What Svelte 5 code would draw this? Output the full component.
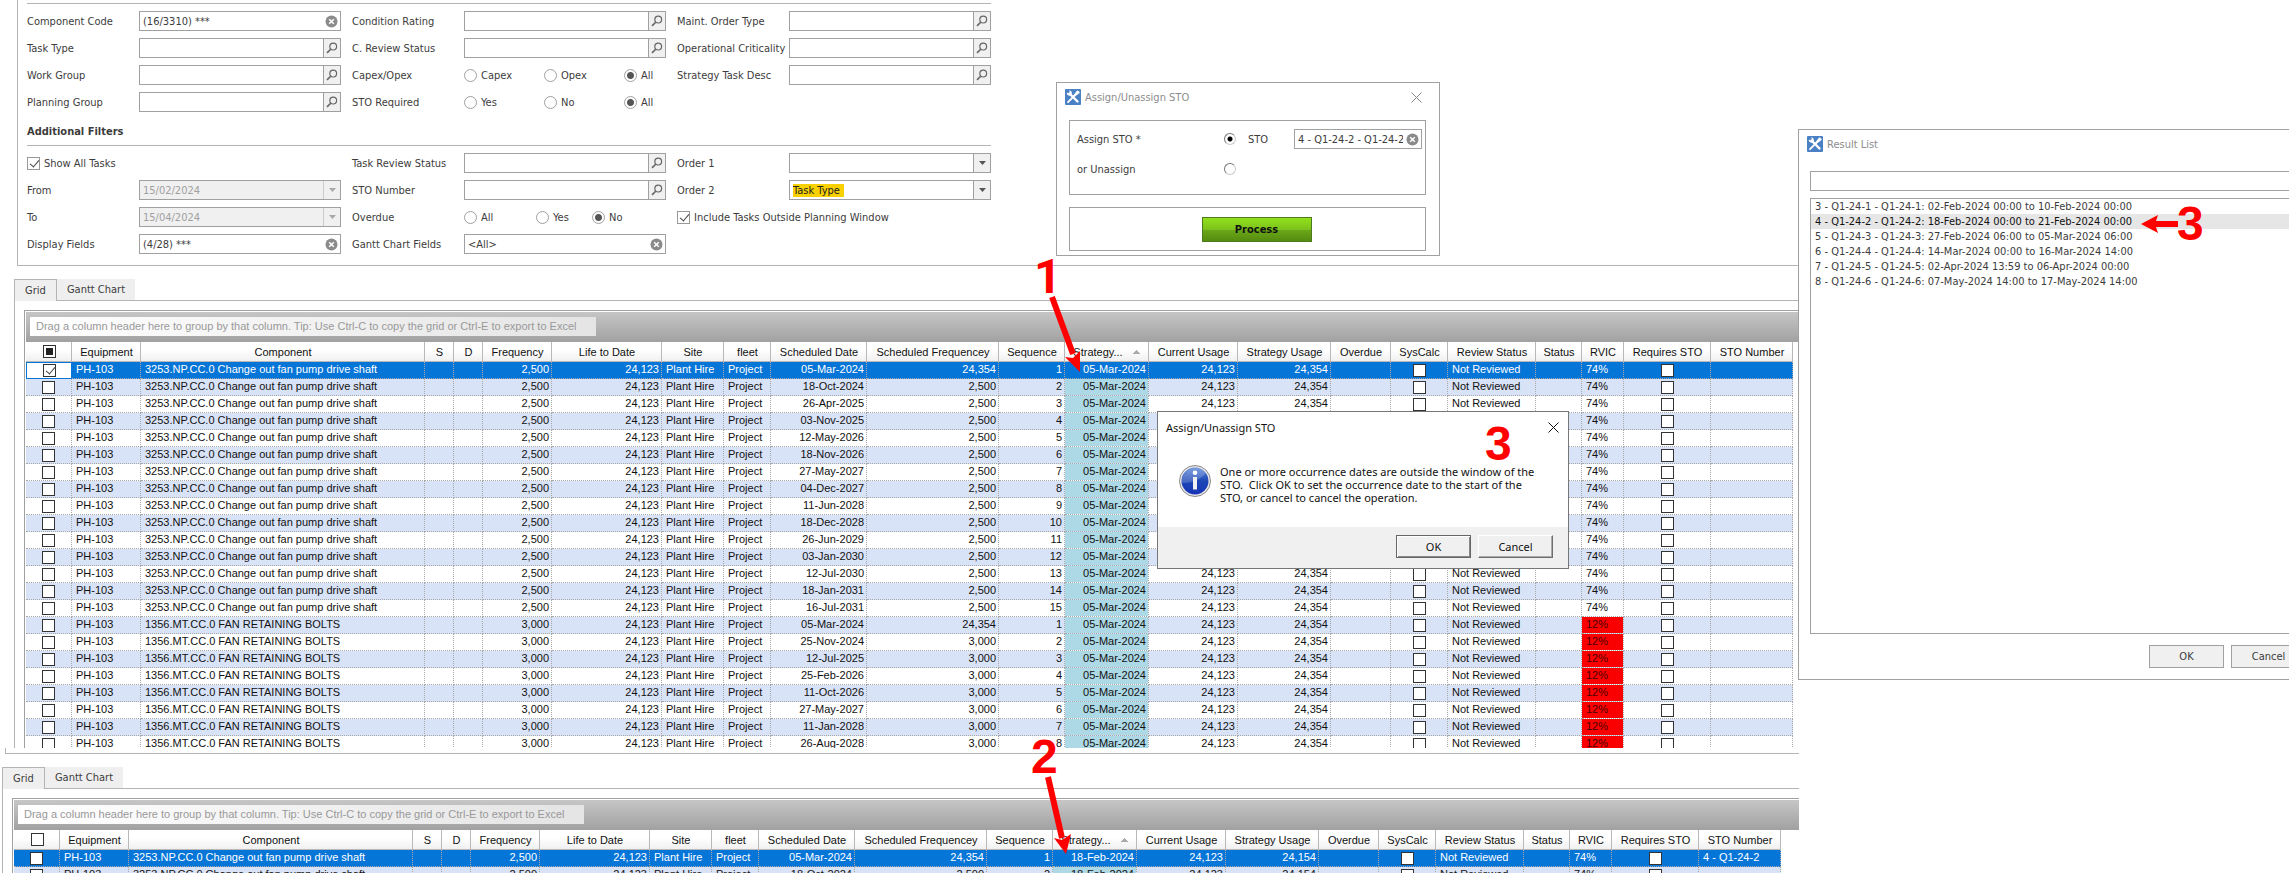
<script lang="ts">
	type Row = {
		component: string;
		frequency: string;
		date: string;
		scheduled: string;
		sequence: number;
		strategy: string;
		usage: string;
		rvic: string;
		sto: string;
	};

	const columns = [
		{ name: 'Equipment', width: 69 },
		{ name: 'Component', width: 284 },
		{ name: 'S', width: 29 },
		{ name: 'D', width: 29 },
		{ name: 'Frequency', width: 69 },
		{ name: 'Life to Date', width: 110 },
		{ name: 'Site', width: 62 },
		{ name: 'fleet', width: 47 },
		{ name: 'Scheduled Date', width: 96 },
		{ name: 'Scheduled Frequencey', width: 132 },
		{ name: 'Sequence', width: 66 },
		{ name: 'Strategy...', width: 84, sorted: true },
		{ name: 'Current Usage', width: 89 },
		{ name: 'Strategy Usage', width: 93 },
		{ name: 'Overdue', width: 60 },
		{ name: 'SysCalc', width: 57 },
		{ name: 'Review Status', width: 88 },
		{ name: 'Status', width: 46 },
		{ name: 'RVIC', width: 42 },
		{ name: 'Requires STO', width: 87 },
		{ name: 'STO Number', width: 82 }
	];

	const shaftDates = [
		'05-Mar-2024', '18-Oct-2024', '26-Apr-2025', '03-Nov-2025', '12-May-2026',
		'18-Nov-2026', '27-May-2027', '04-Dec-2027', '11-Jun-2028', '18-Dec-2028',
		'26-Jun-2029', '03-Jan-2030', '12-Jul-2030', '18-Jan-2031', '16-Jul-2031'
	];
	const boltDates = [
		'05-Mar-2024', '25-Nov-2024', '12-Jul-2025', '25-Feb-2026',
		'11-Oct-2026', '27-May-2027', '11-Jan-2028', '26-Aug-2028'
	];

	function makeRows(
		dates: string[],
		component: string,
		frequency: string,
		rvic: string,
		strategy = '05-Mar-2024',
		usage = '24,354',
		sto = ''
	): Row[] {
		return dates.map((date, i) => ({
			component,
			frequency,
			date,
			scheduled: i === 0 ? '24,354' : frequency,
			sequence: i + 1,
			strategy,
			usage,
			rvic,
			sto: i === 0 ? sto : ''
		}));
	}

	const shaft = '3253.NP.CC.0 Change out fan pump drive shaft';
	const bolts = '1356.MT.CC.0 FAN RETAINING BOLTS';
	const planned = [
		...makeRows(shaftDates, shaft, '2,500', '74%'),
		...makeRows(boltDates, bolts, '3,000', '12%')
	];
	const assigned = makeRows(shaftDates.slice(0, 2), shaft, '2,500', '74%', '18-Feb-2024', '24,154', '4 - Q1-24-2');

	const results = [
		'3 - Q1-24-1 - Q1-24-1: 02-Feb-2024 00:00 to 10-Feb-2024 00:00',
		'4 - Q1-24-2 - Q1-24-2: 18-Feb-2024 00:00 to 21-Feb-2024 00:00',
		'5 - Q1-24-3 - Q1-24-3: 27-Feb-2024 06:00 to 05-Mar-2024 06:00',
		'6 - Q1-24-4 - Q1-24-4: 14-Mar-2024 00:00 to 16-Mar-2024 14:00',
		'7 - Q1-24-5 - Q1-24-5: 02-Apr-2024 13:59 to 06-Apr-2024 00:00',
		'8 - Q1-24-6 - Q1-24-6: 07-May-2024 14:00 to 17-May-2024 14:00'
	];
	let selectedResult = $state(1);

	const partial = (node: HTMLInputElement, on: boolean) => {
		node.indeterminate = on;
	};
</script>

{#snippet clearIcon()}
	<svg width="13" height="13" viewBox="0 0 13 13" aria-hidden="true">
		<circle cx="6.5" cy="6.5" r="6" fill="#8b8b8b" />
		<path d="M4.2 4.2l4.6 4.6M8.8 4.2l-4.6 4.6" stroke="#fff" stroke-width="1.5" />
	</svg>
{/snippet}

{#snippet lookup(id: string, label: string)}
	<label for={id}>{label}</label>
	<div class="field">
		<input {id} type="text" />
		<button class="side" aria-label="Search {label}">
			<svg width="12" height="12" viewBox="0 0 12 12" aria-hidden="true">
				<circle cx="7.2" cy="4.6" r="3.4" fill="none" stroke="#666" stroke-width="1.2" />
				<path d="M4.7 7.2L1 10.9" stroke="#666" stroke-width="1.6" />
			</svg>
		</button>
	</div>
{/snippet}

{#snippet clearable(id: string, label: string, value: string)}
	<label for={id}>{label}</label>
	<div class="field">
		<input {id} type="text" {value} />
		<button class="clear" aria-label="Clear {label}">{@render clearIcon()}</button>
	</div>
{/snippet}

{#snippet arrow()}
	<svg class="arrow" width="7" height="4" viewBox="0 0 7 4" aria-hidden="true">
		<path d="M0 0h7L3.5 4z" fill="currentColor" />
	</svg>
{/snippet}

{#snippet dateBox(id: string, label: string, value: string)}
	<label for={id}>{label}</label>
	<div class="field disabled">
		<input {id} type="text" {value} disabled />
		<button class="side" aria-label="Pick {label}" disabled>{@render arrow()}</button>
	</div>
{/snippet}

{#snippet radios(name: string, label: string, options: string[], checked: string)}
	<span>{label}</span>
	<div class="radios" class:tight={name === 'overdue'} role="radiogroup" aria-label={label}>
		{#each options as option}
			<label><input type="radio" {name} value={option} checked={option === checked} />{option}</label>
		{/each}
	</div>
{/snippet}

{#snippet tools()}
	<svg width="16" height="16" viewBox="0 0 16 16" aria-hidden="true">
		<rect width="16" height="16" rx="1" fill="#4a80c4" />
		<path d="M4.5 4.5l8 8" stroke="#fff" stroke-width="2.4" stroke-linecap="round" />
		<path d="M1.8 3.4a2.6 2.6 0 0 0 4.4 2.4 2.6 2.6 0 0 0-2.4-4.3l1.2 1.6-1.3 1.3z" fill="#fff" />
		<path d="M3 13.2l6.3-6.4" stroke="#fff" stroke-width="1.8" stroke-linecap="round" />
		<path d="M9 7l3.6-4.6 1.2 1.1z" stroke="#fff" stroke-width="1.8" stroke-linejoin="round" fill="#4a80c4" />
	</svg>
{/snippet}

{#snippet cross()}
	<svg width="11" height="11" viewBox="0 0 11 11" aria-hidden="true">
		<path d="M.5.5l10 10M10.5.5l-10 10" stroke="currentColor" />
	</svg>
{/snippet}

{#snippet pane(rows: Row[], ticked: boolean)}
	<div class="tabs" role="tablist">
		<button class="tab active" role="tab" aria-selected="true">Grid</button>
		<button class="tab" role="tab" aria-selected="false">Gantt Chart</button>
		<div class="tab-rest"></div>
	</div>
	<div class="pane-body">
		<div class="grid-box">
			<div class="group-bar">
				<span>Drag a column header here to group by that column. Tip: Use Ctrl-C to copy the grid or Ctrl-E to export to Excel</span>
			</div>
			<table>
				<colgroup>
					<col style="width: 46px" />
					{#each columns as column}
						<col style="width: {column.width}px" />
					{/each}
				</colgroup>
				<thead>
					<tr>
						<th><input type="checkbox" aria-label="Select all" use:partial={ticked} /></th>
						{#each columns as column}
							<th class:sorted={column.sorted}>{column.name}</th>
						{/each}
					</tr>
				</thead>
				<tbody>
					{#each rows as row, i}
						<tr class:selected={i === 0}>
							<td class="mid" class:focused={ticked && i === 0}>
								<input type="checkbox" aria-label="Select row" checked={ticked && i === 0} />
							</td>
							<td>PH-103</td>
							<td>{row.component}</td>
							<td></td>
							<td></td>
							<td class="num">{row.frequency}</td>
							<td class="num">24,123</td>
							<td>Plant Hire</td>
							<td>Project</td>
							<td class="num">{row.date}</td>
							<td class="num">{row.scheduled}</td>
							<td class="num">{row.sequence}</td>
							<td class="num strategy">{row.strategy}</td>
							<td class="num">24,123</td>
							<td class="num">{row.usage}</td>
							<td></td>
							<td class="mid"><input type="checkbox" aria-label="SysCalc" /></td>
							<td>Not Reviewed</td>
							<td></td>
							<td class:low={row.rvic === '12%'}>{row.rvic}</td>
							<td class="mid"><input type="checkbox" aria-label="Requires STO" /></td>
							<td>{row.sto}</td>
						</tr>
					{/each}
				</tbody>
			</table>
		</div>
	</div>
{/snippet}

<div class="screen">
	<main>
		<section class="filters">
			<div class="filter-group">
				<div class="fields">
					{@render clearable('component-code', 'Component Code', '(16/3310) ***')}
					{@render lookup('task-type', 'Task Type')}
					{@render lookup('work-group', 'Work Group')}
					{@render lookup('planning-group', 'Planning Group')}
				</div>
				<div class="fields">
					{@render lookup('condition', 'Condition Rating')}
					{@render lookup('c-review', 'C. Review Status')}
					{@render radios('capex', 'Capex/Opex', ['Capex', 'Opex', 'All'], 'All')}
					{@render radios('sto-required', 'STO Required', ['Yes', 'No', 'All'], 'All')}
				</div>
				<div class="fields">
					{@render lookup('order-type', 'Maint. Order Type')}
					{@render lookup('criticality', 'Operational Criticality')}
					{@render lookup('task-desc', 'Strategy Task Desc')}
				</div>
			</div>
			<h2>Additional Filters</h2>
			<div class="filter-group">
				<div class="fields">
					<label class="check"><input type="checkbox" checked />Show All Tasks</label>
					{@render dateBox('from', 'From', '15/02/2024')}
					{@render dateBox('to', 'To', '15/04/2024')}
					{@render clearable('display-fields', 'Display Fields', '(4/28) ***')}
				</div>
				<div class="fields">
					{@render lookup('task-review', 'Task Review Status')}
					{@render lookup('sto-number', 'STO Number')}
					{@render radios('overdue', 'Overdue', ['All', 'Yes', 'No'], 'No')}
					{@render clearable('gantt-fields', 'Gantt Chart Fields', '<All>')}
				</div>
				<div class="fields">
					<label for="order-1">Order 1</label>
					<div class="field">
						<select id="order-1"><option></option><option>Task Type</option></select>
						<span class="side">{@render arrow()}</span>
					</div>
					<label for="order-2">Order 2</label>
					<div class="field">
						<select id="order-2" class="marked"><option>Task Type</option></select>
						<span class="side">{@render arrow()}</span>
					</div>
					<label class="check"><input type="checkbox" checked />Include Tasks Outside Planning Window</label>
				</div>
			</div>
		</section>

		<section class="pane first">{@render pane(planned, true)}</section>
		<div class="frame-end"></div>
		<section class="pane second">{@render pane(assigned, false)}</section>
	</main>

	<section class="window assign" role="dialog" aria-label="Assign/Unassign STO">
		<header>
			{@render tools()}
			<h3>Assign/Unassign STO</h3>
			<button class="close" aria-label="Close">{@render cross()}</button>
		</header>
		<div class="box choices">
			<label for="assign">Assign STO *</label>
			<input id="assign" type="radio" name="mode" checked />
			<label for="sto">STO</label>
			<div class="field">
				<input id="sto" type="text" value="4 - Q1-24-2 - Q1-24-2" />
				<button class="clear" aria-label="Clear STO">{@render clearIcon()}</button>
			</div>
			<label for="unassign">or Unassign</label>
			<input id="unassign" type="radio" name="mode" />
		</div>
		<div class="box actions">
			<button class="process">Process</button>
		</div>
	</section>

	<section class="window result" role="dialog" aria-label="Result List">
		<header>
			{@render tools()}
			<h3>Result List</h3>
		</header>
		<div class="field"><input type="text" aria-label="Search results" /></div>
		<ul role="listbox" aria-label="Results">
			{#each results as result, i}
				<li role="option" aria-selected={i === selectedResult}>
					<button onclick={() => (selectedResult = i)}>{result}</button>
				</li>
			{/each}
		</ul>
		<footer>
			<button>OK</button>
			<button>Cancel</button>
		</footer>
	</section>

	<section class="window message" role="alertdialog" aria-label="Confirm dates">
		<header>
			<h3>Assign/Unassign STO</h3>
			<button class="close" aria-label="Close">{@render cross()}</button>
		</header>
		<div class="message-body">
			<svg width="32" height="32" viewBox="0 0 32 32" aria-hidden="true">
				<defs>
					<linearGradient id="ball" x1="0" y1="0" x2="0" y2="1">
						<stop offset="0" stop-color="#5b86d8" />
						<stop offset="0.5" stop-color="#1c46b4" />
						<stop offset="1" stop-color="#1733b8" />
					</linearGradient>
				</defs>
				<circle cx="16" cy="16" r="15.5" fill="#e8e8e8" stroke="#8a8a8a" />
				<circle cx="16" cy="16" r="13.5" fill="url(#ball)" />
				<path d="M3 18A13.5 13.5 0 0 1 27 8C22 14 14 18 3 18z" fill="#fff" opacity="0.2" />
				<circle cx="16" cy="7.8" r="2.3" fill="#fff" />
				<path d="M14 12h4v12.500h-4z" fill="#f1f1f1" />
			</svg>
			<p>One or more occurrence dates are outside the window of the<br />STO.&nbsp; Click OK to set the occurrence date to the start of the<br />STO, or cancel to cancel the operation.</p>
		</div>
		<footer>
			<button class="default">OK</button>
			<button>Cancel</button>
		</footer>
	</section>

	<svg class="notes" aria-hidden="true">
		<text class="plain" x="1034" y="293">1</text>
		<path d="M1052 297L1073 354" />
		<path class="head" d="M1080 372L1065 357L1073 358L1080 351z" />
		<text x="1031" y="773">2</text>
		<path d="M1048 777L1062 838" />
		<path class="head" d="M1066 854L1054 838L1062 840L1071 834z" />
		<text x="1485" y="460">3</text>
		<text x="2177" y="240">3</text>
		<path d="M2178 224H2154" />
		<path class="head" d="M2141 224L2158 215L2155 224L2158 233z" />
	</svg>
</div>

<style>
	:global(body) {
		margin: 0;
		background: #fff;
	}

	.screen {
		position: relative;
		height: 100vh;
		overflow: hidden;
		font: 11px/15px 'DejaVu Sans Condensed', 'DejaVu Sans', Tahoma, sans-serif;
		color: #3c3c3c;
	}

	.screen * {
		box-sizing: border-box;
	}

	input,
	select,
	button {
		font: inherit;
		color: inherit;
		margin: 0;
		padding: 0;
		border: 0;
		border-radius: 0;
		background: none;
	}

	svg {
		display: block;
		flex: none;
	}

	main {
		display: flex;
		flex-direction: column;
		height: 100%;
		margin-right: 490px;
	}

	/* Filters */
	.filters {
		flex: none;
		margin-left: 17px;
		padding: 3px 0 4px 9px;
		border-left: 1px solid #b4b4b4;
		border-bottom: 1px solid #b4b4b4;
	}

	.filter-group {
		display: flex;
		gap: 11px;
		width: 964px;
		padding: 7px 0;
		border-top: 1px solid #b4b4b4;
	}

	h2 {
		margin: 0;
		font-size: 11px;
		line-height: 26px;
	}

	.fields {
		display: grid;
		grid-template-columns: 112px 202px;
		grid-auto-rows: 20px;
		align-content: start;
		align-items: center;
		row-gap: 7px;
		white-space: nowrap;
	}

	.field {
		display: flex;
		align-items: center;
		height: 20px;
		border: 1px solid #a0a0a0;
		background: #fff;
		overflow: hidden;
	}

	.field input,
	.field select {
		flex: 1;
		min-width: 0;
		height: 18px;
		padding: 0 3px;
		appearance: none;
		outline: none;
	}

	.side {
		display: flex;
		align-items: center;
		justify-content: center;
		width: 17px;
		height: 18px;
		border-left: 1px solid #a0a0a0;
		background: #f0f0f0;
		color: #555;
		pointer-events: none;
	}

	.disabled {
		background: #f0f0f0;
		color: #a0a0a0;
	}

	.disabled .side {
		border-color: #ccc;
		color: #a8a8a8;
	}

	.clear {
		width: 13px;
		margin-right: 2px;
	}

	.field select.marked {
		color: #222;
		background: linear-gradient(#f9d100, #f9d100) 3px 3px / 51px 13px no-repeat;
	}

	.check {
		grid-column: span 2;
		display: flex;
		align-items: center;
		gap: 4px;
	}

	input[type='checkbox'] {
		appearance: none;
		flex: none;
		width: 13px;
		height: 13px;
		border: 1px solid #999;
		background: #fff;
	}

	input[type='checkbox']:checked::before {
		content: '';
		display: block;
		width: 4px;
		height: 8px;
		margin-left: 4px;
		border: solid #444;
		border-width: 0 1px 1px 0;
		transform: rotate(40deg);
	}

	input[type='checkbox']:indeterminate::before {
		content: '';
		display: block;
		width: 7px;
		height: 7px;
		margin: 2px;
		background: #222;
	}

	.radios {
		display: grid;
		grid-template-columns: 80px 80px auto;
	}

	.radios.tight {
		grid-template-columns: 72px 56px auto;
	}

	.radios label {
		display: flex;
		align-items: center;
		gap: 4px;
	}

	input[type='radio'] {
		appearance: none;
		width: 13px;
		height: 13px;
		border: 1px solid #a0a0a0;
		border-radius: 50%;
	}

	input[type='radio']:checked {
		background: radial-gradient(circle, #555 3px, transparent 4px);
	}

	/* Tabs and grids */
	.pane {
		display: flex;
		flex-direction: column;
		overflow: hidden;
	}

	.first {
		flex: none;
		height: 469px;
		margin: 13px 0 0 14px;
	}

	.second {
		flex: 1;
		min-height: 0;
		margin: 13px 0 0 2px;
	}

	.frame-end {
		flex: none;
		height: 6px;
		margin-left: 5px;
		border-left: 1px solid #b4b4b4;
		border-bottom: 1px solid #b4b4b4;
	}

	.tabs {
		display: flex;
		flex: none;
		height: 22px;
	}

	.tab {
		width: 78px;
		border-bottom: 1px solid #b4b4b4;
		background: #efefef;
	}

	.tab.active {
		width: 43px;
		border: solid #b4b4b4;
		border-width: 1px 1px 0;
	}

	.tab-rest {
		flex: 1;
		border-bottom: 1px solid #b4b4b4;
	}

	.pane-body {
		flex: 1;
		min-height: 0;
		padding: 9px 0 0 9px;
		border-left: 1px solid #b4b4b4;
		overflow: hidden;
	}

	.grid-box {
		min-height: 100%;
		padding: 1px 0 0 1px;
		border: solid #a0a0a0;
		border-width: 1px 0 0 1px;
		font-family: 'Liberation Sans', Arial, sans-serif;
		color: #111;
	}

	.group-bar {
		display: flex;
		align-items: center;
		height: 30px;
		padding: 0 4px 1px;
		background: linear-gradient(#c6c6c6, #a1a1a1);
	}

	.group-bar span {
		width: 566px;
		padding: 0 6px;
		line-height: 19px;
		background: linear-gradient(90deg, #fff, #e4e4e4);
		color: #999;
		white-space: nowrap;
	}

	table {
		width: 1767px;
		table-layout: fixed;
		border-collapse: separate;
		border-spacing: 0;
	}

	th {
		height: 20px;
		padding: 0 0 0 1px;
		border-right: 1px solid #b8b8b8;
		border-bottom: 1px solid #b8b8b8;
		background: linear-gradient(#fff 40%, #f0f0f0);
		font-weight: normal;
		line-height: 16px;
		white-space: nowrap;
	}

	th.sorted {
		padding-right: 18px;
		background:
			conic-gradient(from 135deg at 50% 0, #aaa 90deg, transparent 0) right 8px center / 7px 4px no-repeat,
			linear-gradient(#fff 40%, #f0f0f0);
	}

	td {
		height: 17px;
		padding: 0 2px 0 4px;
		border-right: 1px dotted #a8a8a8;
		border-bottom: 1px dotted #a8a8a8;
		line-height: 14px;
		vertical-align: top;
		white-space: nowrap;
		background-clip: padding-box;
	}

	tbody tr:nth-child(even) {
		background: #d9e3f7;
	}

	.num {
		text-align: right;
	}

	.mid {
		padding: 0;
		vertical-align: middle;
	}

	.strategy {
		background-color: #add8e6;
	}

	.low {
		background-color: #fb0000;
		color: #4a0000;
	}

	tbody tr.selected,
	.selected td.strategy {
		background-color: #0575d8;
		color: #fff;
	}

	.selected td.focused {
		background: #fff;
		border: 1px solid #0575d8;
	}

	table input[type='checkbox'] {
		display: block;
		margin: 0 auto;
		border-color: #333;
	}

	/* Floating windows */
	.window {
		position: absolute;
		border: 1px solid #a0a0a0;
		background: #fff;
	}

	.window header {
		display: flex;
		align-items: center;
		gap: 4px;
		height: 16px;
	}

	h3 {
		flex: 1;
		margin: 0;
		font-size: 11px;
		font-weight: normal;
		color: #8c8c8c;
	}

	.close {
		width: 11px;
		color: #888;
	}

	.box {
		border: 1px solid #a0a0a0;
	}

	.assign {
		left: 1056px;
		top: 82px;
		width: 384px;
		padding: 6px 13px 4px 12px;
	}

	.assign header {
		margin: 0 4px 15px -4px;
	}

	.choices {
		display: grid;
		grid-template-columns: 147px 24px 46px 1fr;
		grid-auto-rows: 20px;
		align-items: center;
		row-gap: 10px;
		height: 75px;
		padding: 8px 3px 0 7px;
	}

	.choices input[type='radio'] {
		width: 12px;
		height: 12px;
		border-color: #777 #ccc #ccc #777;
	}

	.choices input[type='radio']:checked {
		background: radial-gradient(circle, #000 2px, transparent 3px);
	}

	.actions {
		display: flex;
		align-items: center;
		justify-content: center;
		height: 44px;
		margin-top: 12px;
		padding-left: 18px;
	}

	.process {
		width: 110px;
		height: 25px;
		border: 1px solid #4d7a1c;
		background: linear-gradient(#92e01c, #7cc21c 50%, #6aa818 52%, #558c10);
		color: #111;
		font-weight: bold;
	}

	.result {
		left: 1798px;
		right: -29px;
		top: 129px;
		padding: 6px 11px 11px;
	}

	.result header {
		margin: 0 0 19px -3px;
	}

	.result ul {
		height: 436px;
		margin: 7px 0 11px;
		padding: 0;
		border: 1px solid #a0a0a0;
		list-style: none;
	}

	.result li button {
		display: block;
		width: 100%;
		padding: 1px 0 0 4px;
		line-height: 14px;
		text-align: left;
	}

	.result li[aria-selected='true'] {
		background: #e6e6e6;
		color: #111;
	}

	footer {
		display: flex;
		justify-content: flex-end;
		gap: 7px;
	}

	footer button {
		width: 75px;
		height: 23px;
		border: 1px solid #a0a0a0;
		background: #f0f0f0;
	}

	.message {
		left: 1157px;
		top: 411px;
		width: 412px;
		border-color: #777;
		font-family: 'Noto Sans', 'Open Sans', sans-serif;
		line-height: 13px;
		color: #111;
	}

	.message header {
		height: 30px;
		padding: 0 9px 0 8px;
	}

	.message h3,
	.message .close {
		color: #111;
	}

	.message-body {
		display: flex;
		gap: 9px;
		height: 85px;
		padding: 23px 21px 0;
	}

	.message p {
		margin: 0;
		white-space: nowrap;
	}

	.message footer {
		padding: 8px 15px 10px;
		background: #f0f0f0;
	}

	.message footer button {
		border-color: #fff #6e6e6e #6e6e6e #fff;
		box-shadow: inset -1px -1px #aaa;
	}

	.message footer .default {
		border-color: #666;
		box-shadow: inset 1px 1px #fff, inset -1px -1px #888;
	}

	/* Step markers */
	.notes {
		position: absolute;
		inset: 0;
		width: 100%;
		height: 100%;
		pointer-events: none;
	}

	.notes text {
		font: bold 48px 'Liberation Sans', Arial, sans-serif;
		fill: #f00;
	}

	.notes .plain {
		font-family: Roboto, sans-serif;
	}

	.notes path {
		stroke: #f00;
		stroke-width: 6;
	}

	.notes .head {
		fill: #f00;
		stroke: none;
	}
</style>
